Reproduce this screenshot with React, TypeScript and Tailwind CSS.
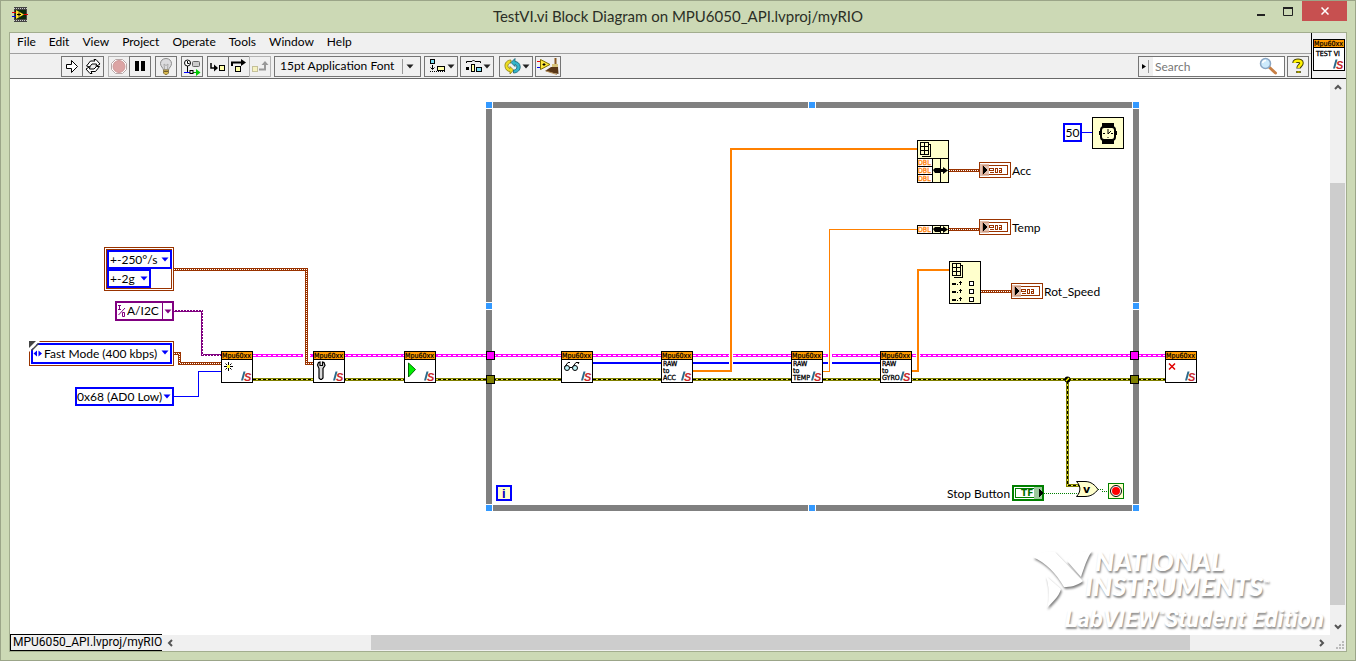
import React from "react";

const uiFont = "font-['Lato','Open_Sans',sans-serif]";

function Caret({ className = "", fill = "#222" }: { className?: string; fill?: string }) {
  return (
    <svg viewBox="0 0 8 5" className={"h-[5px] w-2 " + className} aria-hidden="true">
      <path d="M0.5 0.5H7.5L4 4.5Z" fill={fill} />
    </svg>
  );
}

/* ---------- toolbar ---------- */

const toolBox = "flex h-[21px] items-center justify-center border bg-[#f0f0f0]";

function Tool({
  label,
  children,
  className = "w-[22px]",
  dim = false,
}: {
  label: string;
  children: React.ReactNode;
  className?: string;
  dim?: boolean;
}) {
  return (
    <button
      type="button"
      aria-label={label}
      className={toolBox + " shrink-0 " + (dim ? "border-[#b4b4b4] " : "border-[#757575] ") + className}
    >
      {children}
    </button>
  );
}

function Icon20({ children, w = 20 }: { children: React.ReactNode; w?: number }) {
  return (
    <svg width={w} height={19} viewBox={`0 0 ${w} 19`} fill="none" aria-hidden="true" className="shrink-0">
      {children}
    </svg>
  );
}

function Toolbar() {
  return (
    <div className="flex h-[25px] items-start border-b border-[#686868] bg-[#f0f0f0] pt-[2px] pl-[51px]">
      <div className="flex">
        <Tool label="Run">
          <Icon20>
            <path d="M4.5 7.5H9.5V3.5L15.5 9.5L9.5 15.5V11.5H4.5Z" fill="#fff" stroke="#000" />
          </Icon20>
        </Tool>
        <Tool label="Run Continuously" className="-ml-px w-[22px]">
          <Icon20>
            <path d="M3.5 9L7.500 4H12L11 2.500H13L17 7L13 9.500L13.500 7H9L6.500 10Z" fill="#fff" stroke="#000" />
            <path d="M16.500 9.500L12.500 14.500H8L9 16.500H7L3 12L7 9.500L6.500 12H11L13.500 9.500Z" fill="#fff" stroke="#000" />
          </Icon20>
        </Tool>
      </div>
      <div className="ml-1 flex">
        <Tool label="Abort Execution" dim>
          <Icon20>
            <path d="M6.500 2.500H13.500L17.500 6.500V12.500L13.500 16.500H6.500L2.500 12.500V6.500Z" fill="#fff" stroke="#b8a8a8" />
            <circle cx="10" cy="9.500" r="6" fill="#dca4a4" stroke="#c99" />
          </Icon20>
        </Tool>
        <Tool label="Pause" className="-ml-px w-[22px]">
          <Icon20>
            <path d="M5 4H9V14H5ZM11 4H15V14H11Z" fill="#000" />
          </Icon20>
        </Tool>
      </div>
      <div className="ml-1">
        <Tool label="Highlight Execution">
          <Icon20>
            <path d="M10 1.500C6.500 1.500 4.500 4 4.500 6.500C4.500 9.500 7 10.500 7.500 13H12.500C13 10.500 15.500 9.500 15.500 6.500C15.500 4 13.500 1.500 10 1.500Z" fill="#dcdcde" stroke="#8c8c8c" />
            <path d="M8.500 12L8 7L10 8.500L12 7L11.500 12" stroke="#aaa" />
            <path d="M7.500 13H12.500V16L11 17.500H9L7.500 16Z" fill="#d8b84c" stroke="#8d7a42" />
            <path d="M8 14.500H12" stroke="#735f2e" />
          </Icon20>
        </Tool>
      </div>
      <div className="ml-1">
        <Tool label="Retain Wire Values">
          <Icon20>
            <circle cx="5.500" cy="6" r="3" fill="#fff" stroke="#000" />
            <path d="M5.500 4V6.500H7.500M5.500 9V15" stroke="#000" />
            <rect x="10.500" y="4.500" width="7" height="5" rx="1" fill="#ccc" stroke="#666" />
            <path d="M2 15.500H8" stroke="#00f" />
            <path d="M11 15.500H15" stroke="#090" />
            <rect x="8" y="13.500" width="3" height="3" fill="#ddd" stroke="#000" />
            <path d="M14 12L18.500 15.500L14 19Z" fill="#0c0" />
          </Icon20>
        </Tool>
      </div>
      <div className="ml-1 flex">
        <Tool label="Step Into">
          <Icon20>
            <path d="M3 6V11H7" stroke="#000" strokeWidth="1.500" />
            <path d="M6 7.500L10 11L6 14.500Z" fill="#000" />
            <rect x="11.500" y="8.500" width="5" height="5" fill="#ffffa8" stroke="#000" />
          </Icon20>
        </Tool>
        <Tool label="Step Over" className="-ml-px w-[22px]">
          <Icon20>
            <path d="M3 9V5.500H13" stroke="#000" strokeWidth="2" />
            <path d="M12 2L17 5.500L12 9Z" fill="#000" />
            <rect x="6.500" y="9.500" width="5" height="5" fill="#ffffa8" stroke="#000" />
          </Icon20>
        </Tool>
        <Tool label="Step Out" className="-ml-px w-[22px]" dim>
          <Icon20>
            <rect x="2.500" y="9.500" width="5" height="5" fill="#f6f2c0" stroke="#c4c09a" />
            <path d="M9 12.500H15V7" stroke="#999" strokeWidth="2" />
            <path d="M11.500 8L15 4L18.500 8Z" fill="#999" />
          </Icon20>
        </Tool>
      </div>
      <div className="relative ml-[3px] w-[147px]">
        <select
          aria-label="Text settings"
          className="block h-[21px] w-full appearance-none border border-[#757575] bg-[#f0f0f0] pb-px pl-[5px] text-xs leading-[18px] text-black"
        >
          <option>15pt Application Font</option>
        </select>
        <span className="pointer-events-none absolute top-[3px] right-[18px] h-[15px] border-l border-[#999]" />
        <Caret className="pointer-events-none absolute top-2 right-[7px]" />
      </div>
      <div className="ml-[3px] flex gap-[2px]">
        <Tool label="Align Objects" className="w-[34px]">
          <Icon20 w={19}>
            <rect x="2.500" y="2.500" width="4" height="4" fill="#7be0f5" stroke="#000" />
            <path d="M4.500 8V12M2.500 10.500L4.500 12.500L6.500 10.500" stroke="#000" />
            <path d="M2 14.500H17" stroke="#000" strokeDasharray="1 1" />
            <rect x="9.500" y="9.500" width="7" height="4" fill="#ffffa8" stroke="#000" />
          </Icon20>
          <Caret />
        </Tool>
        <Tool label="Distribute Objects" className="w-[34px]">
          <Icon20 w={19}>
            <path d="M2.500 6V4.500H8L9.500 3L11 4.500H16.500V6" stroke="#000" />
            <rect x="2" y="10" width="3" height="3" fill="#000" />
            <rect x="7.500" y="7.500" width="3" height="7" fill="#ffffa8" stroke="#000" />
            <rect x="12.500" y="10.500" width="5" height="4" fill="#7be0f5" stroke="#000" />
          </Icon20>
          <Caret />
        </Tool>
      </div>
      <div className="ml-[5px] flex gap-[2px]">
        <Tool label="Reorder" className="w-[34px]">
          <Icon20 w={19}>
            <path d="M8 3C4 3 1.500 6 2 9.500C2.300 12.500 4.500 14.500 7 14.500V17L10.500 13L7 9.500V11.500C5.500 11 4.500 9.500 5 8C5.500 6.500 6.500 6 8 6Z" fill="#eede22" stroke="#8a7f10" strokeWidth="0.800" />
            <path d="M10.500 16C14.500 16 17.500 13 17.200 9.500C17 6.500 14.500 4.500 12 4.500V1.500L8 5.500L12 9.500V7.500C13.500 8 14.200 9.500 13.700 11C13.200 12.500 12 13 10.500 13Z" fill="#35b6cc" stroke="#126070" strokeWidth="0.800" />
          </Icon20>
          <Caret />
        </Tool>
        <Tool label="Clean Up Diagram" className="w-[26px]">
          <Icon20 w={24}>
            <path d="M1 4.500H5" stroke="#e00" />
            <path d="M1 10.500H5" stroke="#00e" />
            <path d="M4.500 2.500V12.500L14 7.500Z" fill="#ffe83a" stroke="#7a6a00" />
            <path d="M6.500 7.500H9.500M8 6V9" stroke="#000" />
            <path d="M18.500 1H20.500V8H18.500Z" fill="#8a5a22" />
            <path d="M16 7H22V10H16Z" fill="#d7c37b" />
            <path d="M15 10H22L22.500 17L17 16L9 14Z" fill="#5a3716" />
            <path d="M10 14L21 17.500" stroke="#b58e58" />
          </Icon20>
        </Tool>
      </div>
      <div className="mr-[2px] ml-auto flex gap-[2px]">
        <label className="flex h-[21px] w-[147px] items-center border border-[#757575] bg-white">
          <span className="flex h-full w-[14px] items-center bg-[#f0f0f0]">
            <svg width="10" height="13" viewBox="0 0 10 13" aria-hidden="true">
              <path d="M3 4L7 6.500L3 9Z" fill="#000" />
              <path d="M9.500 0V13" stroke="#999" />
            </svg>
          </span>
          <input
            aria-label="Search"
            placeholder="Search"
            className="w-0 flex-1 bg-transparent pl-[2px] text-xs leading-4 outline-none placeholder:text-[#777]"
          />
          <svg width="20" height="19" viewBox="0 0 20 19" aria-hidden="true" className="mr-1.5">
            <path d="M11 10L17.500 16" stroke="#c77f45" strokeWidth="3" strokeLinecap="round" />
            <circle cx="7.500" cy="6.500" r="5" fill="#cdeafc" stroke="#8aa6c4" strokeWidth="1.500" />
            <path d="M4.500 6C5 4 6.500 3.500 8 3.500" stroke="#fff" strokeWidth="1.500" fill="none" />
          </svg>
        </label>
        <Tool label="Help">
          <Icon20>
            <path d="M6.500 6C6.500 3 13.500 3 13.500 6C13.500 8.500 10.500 8.500 10.500 11.500M10.500 14V16" stroke="#444000" strokeWidth="4.500" />
            <path d="M6.500 6C6.500 3 13.500 3 13.500 6C13.500 8.500 10.500 8.500 10.500 11M10.500 14.500V15.500" stroke="#fff200" strokeWidth="2.500" />
          </Icon20>
        </Tool>
      </div>
    </div>
  );
}

/* ---------- diagram drawing ---------- */

const tiny = "font-['DejaVu_Sans_Condensed','DejaVu_Sans',sans-serif]";

function SubVI({ x, y, children, lines }: { x: number; y: number; children?: React.ReactNode; lines?: string[] }) {
  return (
    <g transform={`translate(${x} ${y})`}>
      <g shapeRendering="crispEdges">
        <rect x="0.500" y="0.500" width="31" height="31" fill="#fff" stroke="#000" />
        <rect x="1" y="1" width="30" height="7" fill="#ff9900" />
        <path d="M0 8.500H32" stroke="#000" />
      </g>
      <text x="1" y="7" fontSize="7" fill="#000" stroke="#000" strokeWidth="0.200" className={tiny}>
        Mpu60xx
      </text>
      {lines?.map((t, i) => (
        <text key={t} x="2" y={15 + i * 7} fontSize="7" fill="#000" stroke="#000" strokeWidth="0.300" className={tiny}>
          {t}
        </text>
      ))}
      <path d="M22.500 20.500H24.500L22 29.500H20Z" fill="#2c6a8c" />
      <text x="23" y="30" fontSize="11" fontWeight="bold" fontStyle="italic" fill="#c8282c" className="font-['Liberation_Sans',sans-serif]">
        S
      </text>
      {children}
    </g>
  );
}

function Terminal({ x, y }: { x: number; y: number }) {
  return (
    <g transform={`translate(${x} ${y})`} shapeRendering="crispEdges">
      <rect x="0.500" y="0.500" width="31" height="15" fill="#fff" stroke="#993300" />
      <rect x="3.500" y="3.500" width="25" height="9" fill="#fff" stroke="#993300" />
      <rect x="1" y="2" width="9" height="12" fill="#d9b09c" fillOpacity="0.800" />
      <path d="M4 4V12L8 8Z" fill="#000" />
      <path d="M10 6.500H14.500V8.500H10.500V6M10.500 10.500H15M16.500 6V10.500H18.500V6.500H16M20 6.500H22.500V10.500H20.500V8.500H23" stroke="#993300" fill="none" />
    </g>
  );
}

function Handle({ x, y }: { x: number; y: number }) {
  return (
    <g shapeRendering="crispEdges">
      <rect x={x - 1} y={y - 1} width="8" height="8" fill="#fff" />
      <rect x={x} y={y} width="6" height="6" fill="#3399ff" />
    </g>
  );
}

function Cable({ d, color, core, dash }: { d: string; color: string; core: string; dash: string }) {
  return (
    <g fill="none" shapeRendering="crispEdges">
      <path d={d} stroke={color} strokeWidth="3" />
      <path d={d} stroke={core} strokeWidth="1" strokeDasharray={dash} />
    </g>
  );
}

function ArrayGlyph({ x, y }: { x: number; y: number }) {
  return (
    <g transform={`translate(${x} ${y})`} shapeRendering="crispEdges">
      <path d="M2.500 13.500V14.500H10.500V2.500H9" stroke="#000" fill="none" />
      <rect x="0.500" y="0.500" width="8" height="12" fill="#ffffcc" stroke="#000" />
      <path d="M4.500 0V13M0 4.500H9M0 8.500H9" stroke="#000" />
    </g>
  );
}

function Bundle({ x, y, rows }: { x: number; y: number; rows: number }) {
  const h = rows * 8;
  const mid = y + h / 2;
  return (
    <g>
      <g shapeRendering="crispEdges">
        <rect x={x + 0.5} y={y + 0.5} width="31" height={h} fill="#ffffcc" stroke="#000" />
        <rect x={x + 1} y={y + 1} width="14" height={h - 1} fill="#fff" />
        <path d={`M${x + 15.5} ${y}V${y + h}M${x + 23.5} ${y}V${y + h}`} stroke="#000" />
        {rows > 1 && <path d={`M${x} ${y + 8.5}H${x + 15}M${x} ${y + 16.5}H${x + 15}`} stroke="#000" />}
      </g>
      {Array.from({ length: rows }, (_, i) => (
        <text key={i} x={x + 1} y={y + 7 + i * 8} fontSize="7" fill="#ff8000" stroke="#ff8000" strokeWidth="0.300" className={tiny}>
          DBL
        </text>
      ))}
      <path d={`M${x + 16} ${mid}L${x + 18} ${mid - 2}H${x + 24}V${mid - 1}H${x + 26}V${mid - 3}L${x + 31} ${mid + 0.5}L${x + 26} ${mid + 4}V${mid + 2}H${x + 24}V${mid + 3}H${x + 18}Z`} fill="#000" />
    </g>
  );
}

function Wiring() {
  const pink = { color: "#ff00ff", core: "#ffffff", dash: "3 2" };
  const error = { color: "#808000", core: "#000000", dash: "3 2" };
  const brown = { color: "#993300", core: "#ffffff", dash: "1 1" };
  return (
    <svg width={1320} height={556} viewBox="10 79 1320 556" fill="none" aria-hidden="true" className="absolute top-0 left-0 max-w-none">
      {/* while loop frame */}
      <rect x="489" y="105" width="647" height="403" stroke="#808080" strokeWidth="6" />
      {[486, 809, 1133].map((x) => (
        <g key={x}>
          <Handle x={x} y={102} />
          <Handle x={x} y={505} />
        </g>
      ))}
      <Handle x={486} y={303} />
      <Handle x={1133} y={303} />

      {/* device session and error lines */}
      <Cable d="M253 355.500H1165" {...pink} />
      <Cable d="M253 379.500H1165" {...error} />
      <path d="M253 379.500H1165" stroke="#e8e84a" strokeDasharray="2 3" strokeDashoffset="2" shapeRendering="crispEdges" />
      <Cable d="M1067.500 381V485.500H1080" {...error} />
      <path d="M1067.500 381V485.500H1080" stroke="#e8e84a" strokeDasharray="2 3" strokeDashoffset="2" shapeRendering="crispEdges" />
      <circle cx="1067.500" cy="379.500" r="3" fill="#000" />
      <path d="M1066 381L1069 378" stroke="#ffff00" strokeWidth="1.500" />

      <g shapeRendering="crispEdges">
        <path d="M593 363H661M693 363H791M823 363H880" stroke="#0000ff" strokeWidth="2" />
        <path d="M731 352V366M829.500 352V366M918 352V360" stroke="#fff" strokeWidth="4" />
        <path d="M306.500 351V360" stroke="#fff" strokeWidth="7" />
        <path d="M693 371H731V149H917M912 371H918V270H949" stroke="#ff8000" strokeWidth="2" />
        <path d="M823 371.500H829.500V229.500H917" stroke="#ff8000" />
        <path d="M174 396.500H198.500V371.500H221M1082 132.500H1092" stroke="#0000ff" />
      </g>
      <Cable d="M174 269.500H306.500V363.500H314" {...brown} />
      <Cable d="M174 353.500H179.500V363.500H221" {...brown} />
      <Cable d="M949 170.500H979" {...brown} />
      <Cable d="M949 229.500H979" {...brown} />
      <Cable d="M981 291.500H1011" {...brown} />
      <g shapeRendering="crispEdges">
        <path d="M174 311H202V355H221" stroke="#800080" strokeWidth="2" />
        <path d="M174 310.500H202.500V355.500H221" stroke="#fff" strokeDasharray="1 2" />
        <path d="M1044 493.500H1080M1098 489.500H1102.500V491.500H1108" stroke="#008000" strokeDasharray="1 1" />
      </g>

      {/* loop tunnels */}
      {[486.5, 1130.5].map((x) => (
        <g key={x} stroke="#000" shapeRendering="crispEdges">
          <rect x={x} y="351.500" width="8" height="8" fill="#ff00ff" />
          <rect x={x} y="375.500" width="8" height="8" fill="#808000" />
        </g>
      ))}

      {/* sub VIs */}
      <SubVI x={221} y={351}>
        <path d="M3 15.500H12M7.500 11V20M4.500 12.500L10.500 18.500M10.500 12.500L4.500 18.500" stroke="#000" />
        <path d="M6 14H9V17H6Z" fill="#ffff44" />
      </SubVI>
      <SubVI x={313} y={351}>
        <path d="M5.500 11.500L4.500 14L6 17.500V27L7.500 28.500H8.500L10 27V17.500L12 14.500L11 11.500L9.500 11V14.500H7V11Z" fill="#d8d8d8" stroke="#000" strokeWidth="1.200" />
      </SubVI>
      <SubVI x={404} y={351}>
        <path d="M4.500 12V26L11.500 18.500Z" fill="#00ee00" stroke="#006b00" />
      </SubVI>
      <SubVI x={561} y={351}>
        <path d="M3.500 16L7 11.500H9M11.500 16L15 11.500H18L17 13M8 16.500H11" stroke="#000" />
        <circle cx="6" cy="17" r="2.500" fill="#bff5fa" stroke="#000" />
        <circle cx="14" cy="17" r="2.500" fill="#bff5fa" stroke="#000" />
      </SubVI>
      <SubVI x={661} y={351} lines={["RAW", "to", "ACC"]} />
      <SubVI x={791} y={351} lines={["RAW", "to", "TEMP"]} />
      <SubVI x={880} y={351} lines={["RAW", "to", "GYRO"]} />
      <SubVI x={1165} y={351}>
        <path d="M4 12.500L10 18.500M10 12.500L4 18.500" stroke="#e00000" strokeWidth="1.500" />
      </SubVI>

      {/* acceleration and temperature bundles */}
      <rect x="917.500" y="140.500" width="31" height="18" fill="#ffffcc" stroke="#000" shapeRendering="crispEdges" />
      <ArrayGlyph x={920} y={142} />
      <Bundle x={917} y={158} rows={3} />
      <Bundle x={917} y={225} rows={1} />

      {/* rotation speed array to cluster */}
      <rect x="949.500" y="261.500" width="31" height="42" fill="#ffffcc" stroke="#000" shapeRendering="crispEdges" />
      <ArrayGlyph x={952} y={263} />
      {[283, 291, 299].map((y) => (
        <g key={y} shapeRendering="crispEdges" stroke="#000">
          <path d={`M952 ${y + 1}H956`} strokeWidth="2" />
          <path d={`M957 ${y + 1.5}H958M960.500 ${y + 2}V${y - 2}M959 ${y - 0.5}H962`} />
          <rect x="969.500" y={y - 1.5} width="4" height="4" fill="#fff" />
        </g>
      ))}

      <Terminal x={979} y={162} />
      <Terminal x={979} y={219} />
      <Terminal x={1011} y={283} />

      {/* wait until next ms multiple */}
      <g>
        <rect x="1092.500" y="117.500" width="31" height="31" fill="#ffffcc" stroke="#000" shapeRendering="crispEdges" />
        <path d="M1102 123H1114V128H1102ZM1102 139H1114V144H1102Z" fill="#000" />
        <rect x="1101" y="127" width="14" height="13" rx="3" fill="#ffffcc" stroke="#000" strokeWidth="2" />
        <path d="M1108 129V134L1111 131M1103 133.500H1105M1111 133.500H1113M1108 137V138" stroke="#000" />
        <rect x="1115" y="131" width="2" height="4" fill="#000" />
        <rect x="1099" y="131" width="2" height="4" fill="#000" />
      </g>

      {/* stop condition */}
      <g shapeRendering="crispEdges">
        <rect x="1013" y="486" width="30" height="14" fill="#fff" stroke="#008000" strokeWidth="2" />
        <rect x="1015.500" y="488.500" width="25" height="9" stroke="#008000" />
        <rect x="1034" y="487" width="8" height="12" fill="#9cc99c" />
        <path d="M1039 489V497L1043 493Z" fill="#000" />
      </g>
      <text x="1021" y="496" fontSize="9" fontWeight="bold" fill="#007000" className="font-['DejaVu_Sans',sans-serif]">
        TF
      </text>
      <path d="M1076.500 481.500H1085C1091 481.500 1095 485 1098 489.500C1095 493.500 1091 496.500 1085 496.500H1076.500C1081 492 1081 486 1076.500 481.500Z" fill="#ffffcc" stroke="#000" />
      <text x="1083" y="493" fontSize="11" fontWeight="bold" fill="#000" className="font-['DejaVu_Sans',sans-serif]">
        v
      </text>
      <rect x="1108.500" y="483.500" width="15" height="15" fill="#ffffcc" stroke="#008000" />
      <circle cx="1116" cy="491" r="5.500" fill="#fff" stroke="#000" />
      <circle cx="1116" cy="491" r="4" fill="#ff0000" />

      {/* iteration terminal */}
      <rect x="497" y="486" width="14" height="14" fill="#ffffcc" stroke="#0000ff" strokeWidth="2" />
      <text x="502" y="498" fontSize="13" fontWeight="bold" fill="#0000c0" className="font-['Liberation_Sans',sans-serif]">
        i
      </text>
    </svg>
  );
}

/* ---------- diagram constants ---------- */

function Ring({ label, value, className, pad = "pl-px" }: { label: string; value: string; className: string; pad?: string }) {
  return (
    <div className={className}>
      <select
        aria-label={label}
        className={"block h-full w-full appearance-none border-2 border-[#0000ff] bg-white text-xs leading-[15px] text-black " + pad}
      >
        <option>{value}</option>
      </select>
      <Caret fill="#0000ff" className="pointer-events-none absolute top-[7px] right-[3px]" />
    </div>
  );
}

function Constants() {
  return (
    <>
      <div className="absolute top-[168px] left-[94px] w-[70px] border border-[#993300] p-px">
        <div className="border border-[#993300]">
          <Ring label="Gyroscope range" value="+-250°/s" className="relative h-[19px] w-[65px]" />
          <Ring label="Accelerometer range" value="+-2g" className="relative h-[19px] w-[44px]" />
        </div>
      </div>

      <div className="absolute top-[222px] left-[105px] h-5 w-[59px]">
        <select
          aria-label="I2C channel"
          className="block h-full w-full appearance-none border-2 border-[#800080] bg-white pl-[10px] text-xs leading-4 text-black"
        >
          <option>A/I2C</option>
        </select>
        <svg width="8" height="14" viewBox="0 0 8 14" aria-hidden="true" className="pointer-events-none absolute top-[3px] left-[3px]">
          <path d="M0 1.500H3M1.500 1V5.500M0 5.500H3M0.500 11L7 4M4.500 8.500H6.500V12.500H4.500Z" stroke="#800080" fill="none" />
        </svg>
        <span className="pointer-events-none absolute top-0 right-[11px] h-full border-l border-[#800080]" />
        <Caret fill="#800080" className="pointer-events-none absolute top-2 right-[2px]" />
      </div>

      <div className="absolute top-[262px] left-[19px] w-[145px] border border-[#993300] p-px">
        <Ring label="I2C speed" value="Fast Mode (400 kbps)" className="relative h-[21px] w-full" pad="pl-[11px]" />
        <svg width="14" height="18" viewBox="0 0 14 18" aria-hidden="true" className="pointer-events-none absolute -top-px -left-px">
          <path d="M0 0H11L0 11Z" fill="#fff" />
          <path d="M0 0H7L0 7Z" fill="#444" />
          <path d="M2 9L9 2H11L3 10Z" fill="#444" />
          <path d="M4.500 12.500L8 9.500V15.500ZM13 12.500L9.500 9.500V15.500Z" fill="#0000ff" />
        </svg>
      </div>

      <Ring label="I2C address" value="0x68 (AD0 Low)" className="absolute top-[308px] left-[65px] h-[19px] w-[99px]" pad="pl-0" />

      <input
        aria-label="Milliseconds multiple"
        defaultValue="50"
        className="absolute top-[44px] left-[1053px] h-[19px] w-[19px] border-2 border-[#0000ff] bg-white text-center text-xs leading-[15px]"
      />

      <span className="absolute top-[84px] left-[1002px] text-xs leading-4">Acc</span>
      <span className="absolute top-[141px] left-[1002px] text-xs leading-4">Temp</span>
      <span className="absolute top-[205px] left-[1034px] text-xs leading-4">Rot_Speed</span>
      <span className="absolute top-[407px] left-[937px] text-xs leading-4">Stop Button</span>
    </>
  );
}

const relief = "[text-shadow:1px_2px_2px_rgba(0,0,0,0.45)]";

function Watermark() {
  return (
    <div className="pointer-events-none absolute right-[6px] bottom-0 h-[86px] w-[292px] text-white">
      <svg width="64" height="66" viewBox="0 0 64 66" aria-hidden="true" className="absolute top-0 left-0 drop-shadow-[1px_2px_1px_rgba(0,0,0,0.5)]">
        <path d="M1 8C8 3 16 1 23 3L51 32C45 37 38 38 32 38C24 24 14 14 1 8Z" fill="#fff" />
        <path d="M35 12C40 4 48 2 60 2C55 9 52 19 49 28Z" fill="#fff" />
        <path d="M14 27L29 40C27 48 20 53 15 59C18 48 17 38 14 27Z" fill="#fff" />
      </svg>
      <p className={"absolute -top-px left-[53px] indent-[10px] font-['Lato',sans-serif] text-[27px] leading-[25px] font-black whitespace-nowrap italic " + relief}>
        NATIONAL
        <br />
        INSTRUMENTS<span className="align-super text-[8px] leading-none">™</span>
      </p>
      <p className={"absolute right-0 bottom-0 font-['Roboto',sans-serif] text-[24px] leading-[32px] font-bold whitespace-nowrap italic " + relief}>
        LabVIEW<span className="align-super text-[9px] leading-none">™</span>Student Edition
      </p>
    </div>
  );
}

/* ---------- window ---------- */

function Arrow({ d, label }: { d: string; label: string }) {
  return (
    <button type="button" aria-label={label} className="flex h-4 w-4 shrink-0 items-center justify-center bg-[#f0f0f0]">
      <svg width="8" height="8" viewBox="0 0 8 8" fill="none" aria-hidden="true">
        <path d={d} stroke="#555" strokeWidth="2" />
      </svg>
    </button>
  );
}

function TitleBar() {
  return (
    <header className="grid h-[31px] shrink-0 grid-cols-[1fr_auto_1fr] items-start">
      <svg width="16" height="16" viewBox="0 0 16 16" aria-hidden="true" className="mt-[6px] ml-[11px]">
        <rect x="2" y="0" width="13" height="15" fill="#444" />
        <path d="M2 1.500H15M2 13.500H15" stroke="#ccc" strokeDasharray="1 1" />
        <rect x="3" y="3" width="11" height="9" fill="#0a2a0a" />
        <path d="M0 5.500H4M12 7.500H16" stroke="#e00000" />
        <path d="M0 9.500H4" stroke="#0000e0" />
        <path d="M4 3V12L12 7.500Z" fill="#ffe030" />
        <path d="M5 7.500H9M7 5.500V9.500" stroke="#000" />
      </svg>
      <h1 className="pt-1 text-[15px] leading-[22px] text-[#2b2f26]">TestVI.vi Block Diagram on MPU6050_API.lvproj/myRIO</h1>
      <div className="mr-2 flex justify-end">
        <button type="button" aria-label="Minimize" className="flex h-5 w-[26px] items-center justify-center">
          <svg width="10" height="12" viewBox="0 0 10 12" aria-hidden="true">
            <path d="M1 9H9V11H1Z" fill="#222" />
          </svg>
        </button>
        <button type="button" aria-label="Maximize" className="flex h-5 w-[28px] items-center justify-center">
          <svg width="10" height="9" viewBox="0 0 10 9" aria-hidden="true">
            <path d="M0.500 0.500H9.500V8.500H0.500Z" fill="none" stroke="#222" />
            <path d="M0 1H10" stroke="#222" strokeWidth="2" />
          </svg>
        </button>
        <button type="button" aria-label="Close" className="flex h-5 w-[45px] items-center justify-center bg-[#c75050]">
          <svg width="8" height="8" viewBox="0 0 8 8" aria-hidden="true">
            <path d="M0.500 0.500L7.500 7.500M7.500 0.500L0.500 7.500" stroke="#fff" strokeWidth="1.500" />
          </svg>
        </button>
      </div>
    </header>
  );
}

const menus = ["File", "Edit", "View", "Project", "Operate", "Tools", "Window", "Help"];

export default function App() {
  return (
    <div className={"flex h-screen min-h-[400px] flex-col overflow-hidden border border-[#9ba588] bg-[#ccd9b5] text-black " + uiFont}>
      <TitleBar />
      <div className="mx-2 mb-2 flex min-h-0 flex-1 flex-col border border-[#a2ad8e] bg-white">
        <div className="flex shrink-0 bg-[#f0f0f0]">
          <div className="min-w-0 flex-1">
            <nav className="flex h-[21px] items-center gap-[13px] border-b border-[#a0a0a0] pb-0.5 pl-[7px] text-xs leading-4">
              {menus.map((m) => (
                <button key={m} type="button">
                  {m}
                </button>
              ))}
            </nav>
            <Toolbar />
          </div>
          <div className="border-b border-l border-black px-px pt-[6px]">
            <svg width="32" height="32" viewBox="0 0 32 32" role="img" aria-label="VI icon" className="block">
              <SubVI x={0} y={0}>
                <text x="3" y="17" fontSize="7" fill="#000" stroke="#000" strokeWidth="0.300" className={tiny}>
                  TEST VI
                </text>
              </SubVI>
            </svg>
          </div>
        </div>
        <div className="flex min-h-0 flex-1">
          <main className="relative min-w-0 flex-1 overflow-hidden bg-white">
            <Watermark />
            <Wiring />
            <Constants />
          </main>
          <div className="flex w-4 flex-col bg-[#f0f0f0]">
            <Arrow label="Scroll up" d="M1 6L4 3L7 6" />
            <span className="flex-[88]" />
            <span className="mr-px flex-[422] bg-[#cdcdcd]" />
            <span className="flex-[14]" />
            <Arrow label="Scroll down" d="M1 2L4 5L7 2" />
          </div>
        </div>
        <div className="flex h-4 shrink-0 bg-[#f0f0f0]">
          <span className="z-10 -mt-px w-[152px] shrink-0 border border-r-0 border-black bg-[#f0f0f0] pl-[2px] font-['Roboto',sans-serif] text-xs leading-[15px] whitespace-nowrap">
            MPU6050_API.lvproj/myRIO
          </span>
          <Arrow label="Scroll left" d="M6 1L3 4L6 7" />
          <span className="flex-[193]" />
          <span className="mb-px flex-[819] bg-[#cdcdcd]" />
          <span className="flex-[124]" />
          <Arrow label="Scroll right" d="M2 1L5 4L2 7" />
          <svg width="16" height="16" viewBox="0 0 16 16" aria-hidden="true" className="shrink-0">
            <path d="M12 6H14V8H12ZM9 9H11V11H9ZM12 9H14V11H12ZM6 12H8V14H6ZM9 12H11V14H9ZM12 12H14V14H12Z" fill="#bbb" />
          </svg>
        </div>
      </div>
    </div>
  );
}
